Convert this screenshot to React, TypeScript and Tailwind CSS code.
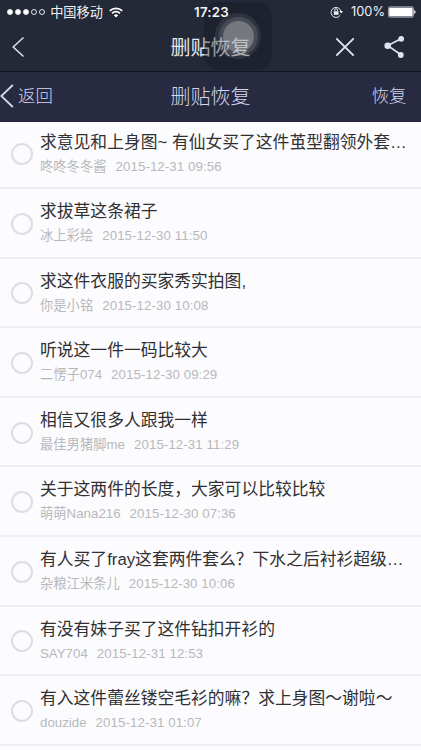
const posts = [
  { title: "求意见和上身图~ 有仙女买了这件茧型翻领外套…", author: "咚咚冬冬酱", time: "2015-12-31 09:56" },
  { title: "求拔草这条裙子", author: "冰上彩绘", time: "2015-12-30 11:50" },
  { title: "求这件衣服的买家秀实拍图,", author: "你是小铭", time: "2015-12-30 10:08" },
  { title: "听说这一件一码比较大", author: "二愣子074", time: "2015-12-30 09:29" },
  { title: "相信又很多人跟我一样", author: "最佳男猪脚me", time: "2015-12-31 11:29" },
  { title: "关于这两件的长度，大家可以比较比较", author: "萌萌Nana216", time: "2015-12-30 07:36" },
  { title: "有人买了fray这套两件套么？下水之后衬衫超级…", author: "杂粮江米条儿", time: "2015-12-30 10:06" },
  { title: "有没有妹子买了这件钻扣开衫的", author: "SAY704", time: "2015-12-31 12:53" },
  { title: "有入这件蕾丝镂空毛衫的嘛？求上身图～谢啦～", author: "douzide", time: "2015-12-31 01:07" },
];

function StatusBar() {
  return (
    <div className="relative z-10 grid h-6 grid-cols-[1fr_auto_1fr] items-center pl-[7px] pr-[5px] font-['Inter','Noto_Sans_CJK_SC',sans-serif] text-[13px] leading-6 text-[#f2f3f6]">
      <div className="flex items-center">
        <div className="flex gap-[1.8px]">
          {[0, 1, 2, 3, 4].map((i) => (
            <span key={i} className={`size-[6.2px] rounded-full border-[0.8px] border-[#e4e6ea] ${i < 3 ? "bg-white" : ""}`} />
          ))}
        </div>
        <span className="ml-[5px] text-[13.2px]">中国移动</span>
        <svg className="ml-[6px]" width="14" height="11" viewBox="0 0 14 11" fill="none" stroke="white" strokeWidth="1.7">
          <path d="M.7 3.9a9 9 0 0 1 12.6 0M3 6.3a5.8 5.8 0 0 1 8 0" />
          <path d="M7 10.5 4.8 8.3a3.1 3.1 0 0 1 4.4 0z" fill="white" stroke="none" />
        </svg>
      </div>
      <span className="text-[13.3px] font-semibold tracking-[0.2px]">17:23</span>
      <div className="flex items-center justify-end">
        <svg width="14" height="12" viewBox="0 0 14 12" fill="none" stroke="#eceef2">
          <path d="M10.2 9.3A5 5 0 1 1 11 5.5" strokeWidth="1" />
          <path d="m9.3 5 3.7 0-1.8 2.6z" fill="#eceef2" stroke="none" />
          <rect x="3.8" y="5.3" width="4.7" height="3.5" fill="#eceef2" stroke="none" />
          <path d="M4.8 5.3V4a1.35 1.35 0 0 1 2.7 0v1.3" strokeWidth=".9" />
        </svg>
        <span className="ml-[7px] text-[12.8px]">100%</span>
        <svg className="ml-[3px]" width="28" height="12" viewBox="0 0 28 12">
          <rect x=".4" y=".9" width="25" height="10.2" rx="1.5" fill="none" stroke="#d4d7dc" strokeWidth=".8" />
          <rect x="1.2" y="1.7" width="23.4" height="8.6" rx=".8" fill="white" />
          <path d="M26.2 4.2q1.4.3 1.4 1.8t-1.4 1.8z" fill="white" />
        </svg>
      </div>
    </div>
  );
}

export default function App() {
  return (
    <div className="relative flex h-[750px] w-[421px] flex-col overflow-hidden bg-[#fcfcfe] font-['Liberation_Sans','Noto_Sans_CJK_SC',sans-serif]">
      <header className="shrink-0 bg-[#232936]">
        <StatusBar />
        <div className="grid h-[48px] grid-cols-[1fr_auto_1fr] items-center border-b border-[#11151f] pl-[16px] pr-[16px] text-[#dfe3ef]">
          <svg className="-ml-[4px] -mt-[2px]" width="13" height="22" viewBox="0 0 13 22" fill="none" stroke="currentColor" strokeWidth="1.5">
            <path d="M11.5 1.5 1.2 11l10.3 9.5" />
          </svg>
          <h1 className="pt-[1px] text-[20px] leading-[46px] text-[#e3e5ec]">删贴恢复</h1>
          <div className="-mt-[2px] flex items-center justify-end gap-[29px]">
            <svg width="20" height="20" viewBox="0 0 20 20" fill="none" stroke="currentColor" strokeWidth="1.9">
              <path d="m1.3 1.3 17.4 17.4m0-17.4L1.3 18.7" />
            </svg>
            <svg width="21" height="24" viewBox="0 0 21 24" fill="none" stroke="currentColor" strokeWidth="1.7">
              <path d="M17 3.8 3.8 10.6l13.2 9.2" />
              <g fill="currentColor" stroke="none">
                <circle cx="17.2" cy="3.8" r="2.9" />
                <circle cx="3.7" cy="10.8" r="3.3" />
                <circle cx="16.8" cy="20" r="2.9" />
              </g>
            </svg>
          </div>
        </div>
      </header>
      <nav className="grid h-[50px] shrink-0 grid-cols-[1fr_auto_1fr] items-center border-b border-[#29273a] bg-[#272a40] text-[#d3d7ee]">
        <div className="flex items-center gap-[4px]">
          <svg width="14" height="24" viewBox="0 0 14 24" fill="none" stroke="currentColor" strokeWidth="1.9">
            <path d="M12.8 1 1.3 12l11.5 11" />
          </svg>
          <span className="text-[17.4px] font-light">返回</span>
        </div>
        <span className="text-[20px] font-light">删贴恢复</span>
        <span className="pr-[14.5px] text-right text-[17.4px] font-light">恢复</span>
      </nav>

      <ul className="-mt-[2.6px] flex flex-col">
        {posts.map((post) => (
          <li key={post.title} className="flex h-[69.6px] shrink-0 items-center border-b-2 border-[#efeff2] pl-[11px]">
            <span className="mt-[2px] size-[22px] shrink-0 rounded-full border-2 border-[#dedee0]" />
            <div className="ml-[7px] mt-[0.6px] whitespace-nowrap">
              <p className="text-[16.8px] leading-[26px] text-[#303033]">{post.title}</p>
              <p className="flex gap-[9px] text-[13.3px] leading-[22px] text-[#b8b8bc]">
                <span>{post.author}</span>
                <span className="tracking-[0.08px]">{post.time}</span>
              </p>
            </div>
          </li>
        ))}
      </ul>

      <div className="absolute left-[204px] top-[2px] flex size-[68px] items-center justify-center rounded-[14px] bg-[#14171f]/35">
        <div className="flex size-[46px] items-center justify-center rounded-full bg-white/8">
          <div className="flex size-[39px] items-center justify-center rounded-full bg-white/12">
            <div className="size-[31px] rounded-full bg-white/25" />
          </div>
        </div>
      </div>
    </div>
  );
}
